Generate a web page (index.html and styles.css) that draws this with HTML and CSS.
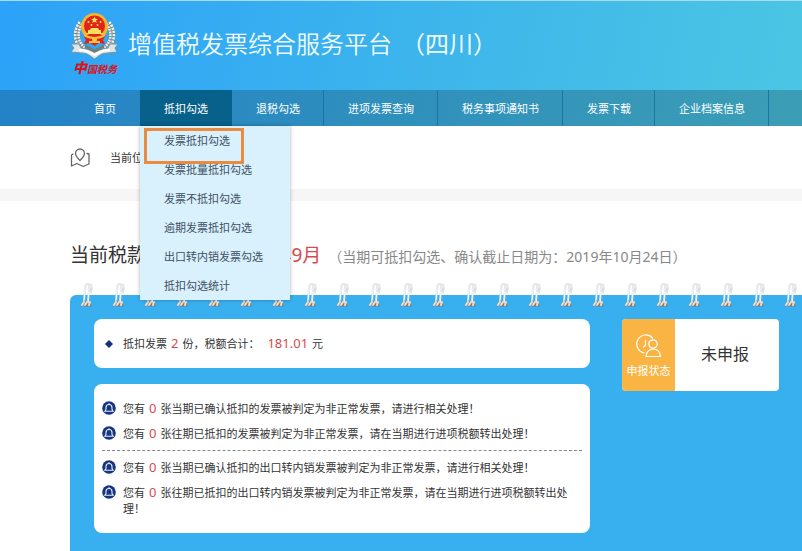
FILE: index.html
```
<!DOCTYPE html>
<html lang="zh-CN">
<head>
    <meta charset="UTF-8">
    <title>增值税发票综合服务平台</title>
    <link rel="stylesheet" href="styles.css">
</head>
<body>
    <header class="header">
        <div class="brand">
            <div class="logo">
                <svg width="50" height="48" viewBox="0 0 50 48" aria-hidden="true">
                    <!-- wheat wreath -->
                    <g fill="none">
                        <path d="M11 11 C5 19 5 30 14 37 M38 11 C44 19 44 30 35 37" stroke="#6d8796" stroke-width="6"/>
                        <path d="M11 11 C5 19 5 30 14 37 M38 11 C44 19 44 30 35 37" stroke="#f3f3ea" stroke-width="6" stroke-dasharray="2 1"/>
                        <path d="M11 11 C5 19 5 30 14 37 M38 11 C44 19 44 30 35 37" stroke="#7d8f90" stroke-width="1"/>
                    </g>
                    <!-- ribbon -->
                    <path d="M1 32 L9 32 L11 36 C19 37 21 39 24.500 40 C28 39 30 37 38 36 L40 32 L48 32 L45 36 L47 40 L38 41 C31 41 29 44 24.500 47 C20 44 18 41 11 41 L1 40 L4 36 Z" fill="#dfe6e6" stroke="#7892a0" stroke-width="1"/>
                    <path d="M9 38 C18 38 20 41 24.500 43 C29 41 31 38 40 38" fill="none" stroke="#fff" stroke-width="2"/>
                    <path d="M15 34 L24.500 39 L34 34" fill="none" stroke="#6f7f78" stroke-width="3"/>
                    <!-- emblem -->
                    <circle cx="24.500" cy="14.500" r="13.500" fill="#f5b52e"/>
                    <circle cx="24.500" cy="14" r="10.500" fill="#e2231a"/>
                    <path d="M24.500 4.500 l1 2.300 2.500 .2 -1.900 1.600 .6 2.400 -2.200 -1.300 -2.200 1.300 .6 -2.400 -1.900 -1.600 2.500 -.2Z" fill="#ffe15a"/>
                    <g fill="#ffe15a">
                        <circle cx="18.500" cy="10" r="1"/>
                        <circle cx="30.500" cy="10" r="1"/>
                        <circle cx="21.500" cy="13" r="1"/>
                        <circle cx="27.500" cy="13" r="1"/>
                        <path d="M20 18 L21 16 H28 L29 18 H31 V21 H33 V22 H16 V21 H18 V18Z"/>
                    </g>
                    <path d="M13 23 H36 L33 28 L35 32 L29 31 L24.500 34 L20 31 L14 32 L16 28Z" fill="#e2231a"/>
                    <path d="M14 23 C20 27 29 27 35 23 M19 30 H30" fill="none" stroke="#f8c43c" stroke-width="2"/>
                    <circle cx="24.500" cy="27.500" r="2.500" fill="#f8c43c"/>
                </svg>
                <span class="logo-text"><b>中</b>国税务</span>
            </div>
            <h1>增值税发票综合服务平台<span class="region">（四川）</span></h1>
        </div>
        <nav>
            <ul class="nav">
                <li><a href="#">首页</a></li>
                <li class="active">
                    <a href="#">抵扣勾选</a>
                    <ul class="submenu">
                        <li class="marked"><a href="#">发票抵扣勾选</a></li>
                        <li><a href="#">发票批量抵扣勾选</a></li>
                        <li><a href="#">发票不抵扣勾选</a></li>
                        <li><a href="#">逾期发票抵扣勾选</a></li>
                        <li><a href="#">出口转内销发票勾选</a></li>
                        <li><a href="#">抵扣勾选统计</a></li>
                    </ul>
                </li>
                <li><a href="#">退税勾选</a></li>
                <li><a href="#">进项发票查询</a></li>
                <li><a href="#">税务事项通知书</a></li>
                <li><a href="#">发票下载</a></li>
                <li><a href="#">企业档案信息</a></li>
            </ul>
        </nav>
    </header>

    <div class="breadcrumb">
        <svg width="20" height="20" viewBox="0 0 20 20" fill="none" stroke="#666" stroke-width="1.300" stroke-linejoin="round" stroke-linecap="round" aria-hidden="true">
            <path d="M10 12.500 C7 9.500 5.500 7.500 5.500 5.500 A4.500 4.500 0 0 1 14.500 5.500 C14.500 7.500 13 9.500 10 12.500Z"/>
            <path d="M3 6 L1.500 7 V18 L7 15.500 L13 18.500 L19 16 V6 L17 5.500"/>
        </svg>
        <span>当前位置：</span>
    </div>

    <main>
        <h2 class="period">当前税款所属期：<span class="date">2019年9月</span><small>（当期可抵扣勾选、确认截止日期为：2019年10月24日）</small></h2>

        <div class="panel">
            <svg class="rings" width="100%" height="26" aria-hidden="true">
                <defs>
                    <pattern id="ring" width="32" height="26" patternUnits="userSpaceOnUse">
                        <g fill="none" stroke-linecap="round">
                            <path d="M14 20 L15 7 C15 2 18 1 19 3 L20 8 M18 20 L19 7 C19 2 22 1 22 6 L21 10" stroke="#dcdfe1" stroke-width="2"/>
                            <path d="M14 20 L15 7 C15 2 18 1 19 3 M18 20 L19 7 C19 2 22 1 22 6" stroke="#f3f5f6" stroke-width="1"/>
                            <path d="M12 24 L14 20 L15 24 M16 24 L17 20 L18 24 M20 20 L21 24" stroke="#8a7a70" stroke-width="1.500"/>
                            <path d="M12 23 L14 20 M15 23 L17 20 M19 23 L20 20" stroke="#f6dcc6" stroke-width="2"/>
                        </g>
                    </pattern>
                </defs>
                <rect width="100%" height="26" fill="url(#ring)"/>
            </svg>

            <div class="cards">
                <section class="card summary">
                    <svg width="8" height="8" viewBox="0 0 8 8" aria-hidden="true"><path d="M4 0 L8 4 L4 8 L0 4Z" fill="#15317a"/></svg>
                    <p>抵扣发票<span class="num">2</span>份，税额合计：<span class="num amount">181.01</span>元</p>
                </section>

                <section class="card">
                    <svg width="0" height="0" class="symbols" aria-hidden="true">
                        <symbol id="bell" viewBox="0 0 14 14">
                            <circle cx="7" cy="7" r="6.800" fill="#17357f"/>
                            <path d="M2.800 10.300 L4 8.500 V6.500 C4 2.500 10 2.500 10 6.500 V8.500 L11.200 10.300Z" fill="none" stroke="#e8eefb" stroke-width="1.100"/>
                            <path d="M7 2.200 V4" stroke="#e8eefb" stroke-width="1.200"/>
                        </symbol>
                    </svg>
                    <ul class="notices">
                        <li><svg width="14" height="14"><use href="#bell"/></svg><p>您有<span class="num">0</span>张当期已确认抵扣的发票被判定为非正常发票，请进行相关处理！</p></li>
                        <li><svg width="14" height="14"><use href="#bell"/></svg><p>您有<span class="num">0</span>张往期已抵扣的发票被判定为非正常发票，请在当期进行进项税额转出处理！</p></li>
                    </ul>
                    <ul class="notices">
                        <li><svg width="14" height="14"><use href="#bell"/></svg><p>您有<span class="num">0</span>张当期已确认抵扣的出口转内销发票被判定为非正常发票，请进行相关处理！</p></li>
                        <li><svg width="14" height="14"><use href="#bell"/></svg><p>您有<span class="num">0</span>张往期已抵扣的出口转内销发票被判定为非正常发票，请在当期进行进项税额转出处理！</p></li>
                    </ul>
                </section>
            </div>

            <aside class="status">
                <div class="status-label">
                    <svg width="26" height="24" viewBox="0 0 26 24" fill="none" stroke="#fff" stroke-width="1.200" stroke-linecap="round" stroke-linejoin="round" aria-hidden="true">
                        <path d="M8 18.800 A9 9 0 1 1 16.500 4"/>
                        <path d="M9.500 6 V11 L7.500 13"/>
                        <circle cx="17" cy="10" r="4.200"/>
                        <path d="M10 22.500 C10 12.500 24.500 12.500 24.500 22.500Z"/>
                    </svg>
                    <span>申报状态</span>
                </div>
                <div class="status-value">未申报</div>
            </aside>
        </div>
    </main>
</body>
</html>
```

FILE: styles.css
```
* {
    box-sizing: border-box;
}

body {
    font-family: "Noto Sans", "Noto Sans CJK SC", sans-serif;
    font-size: 11px;
    line-height: 16px;
    color: #333;
    background-color: #fff;
    margin: 0;
    min-height: 100vh;
    display: flex;
    flex-direction: column;
    overflow: hidden;
}

h1, h2, p, ul {
    margin: 0;
    padding: 0;
    font-weight: normal;
}

ul {
    list-style: none;
}

a {
    color: inherit;
    text-decoration: none;
}

.header {
    background: linear-gradient(100deg, #2ca2f9, #3cb4ec 50%, #4bc6e3);
    border-top: 1px solid #a9dcf9;
}

.brand {
    display: flex;
    gap: 8px;
    height: 89px;
    padding: 11px 0 0 70px;
}

.logo {
    display: flex;
    flex-direction: column;
    align-items: center;
    width: 50px;
}

.logo-text {
    color: #d8141c;
    font-size: 10px;
    font-style: italic;
    font-weight: bold;
    white-space: nowrap;
}

.logo-text b {
    font-size: 14px;
}

h1 {
    color: #f0fbff;
    font-family: "Noto Sans CJK SC", sans-serif;
    font-size: 24px;
    font-weight: 350;
    line-height: 62px;
    white-space: nowrap;
}

.region {
    font-weight: normal;
    margin-left: 9px;
}

.nav {
    display: flex;
    background-color: rgba(0, 0, 0, 0.2);
    color: #fff;
    padding-left: 70px;
    white-space: nowrap;
}

.nav > li {
    position: relative;
    border-right: 1px solid #1b759c;
}

.nav > li:first-child, .nav > .active {
    border-color: transparent;
}

.nav > .active {
    background-color: #07618a;
}

.nav > li > a {
    display: block;
    line-height: 37px;
    height: 36px;
    padding: 0 23px 0 24px;
}

.submenu {
    position: absolute;
    top: 100%;
    left: 0;
    z-index: 2;
    width: 150px;
    background-color: #d9f0fd;
    color: #40505f;
    box-shadow: 0 0 4px rgba(0, 0, 0, 0.3);
}

.submenu a {
    display: block;
    line-height: 29px;
    padding-left: 24px;
}

.submenu a:hover {
    color: #07618a;
}

.marked {
    position: relative;
}

.marked::after {
    content: "";
    position: absolute;
    top: 2px;
    left: 4px;
    width: 94px;
    height: 30px;
    border: 3px solid #ea8b42;
    pointer-events: none;
}

.breadcrumb {
    display: flex;
    align-items: center;
    gap: 20px;
    height: 75px;
    padding-left: 70px;
    border-bottom: 12px solid #f6f6f6;
}

main {
    display: flex;
    flex: 1;
    flex-direction: column;
    padding: 38px 0 0 70px;
}

.period {
    font-size: 19px;
    line-height: 32px;
    white-space: nowrap;
}

.date {
    color: #d14b4f;
    margin: 0 7px;
}

.period small {
    color: #888;
    font-size: 14px;
    line-height: 20px;
}

.panel {
    position: relative;
    display: flex;
    flex: 1;
    align-items: flex-start;
    gap: 32px;
    margin-top: 24px;
    padding: 24px 23px 19px 24px;
    background-color: #38b0ef;
    border-top-left-radius: 6px;
}

.rings {
    position: absolute;
    top: -13px;
    left: 0;
}

.cards {
    display: flex;
    flex: 1;
    flex-direction: column;
    gap: 16px;
}

.card {
    background-color: #fff;
    border-radius: 8px;
    padding: 17px 8px 16px;
}

.summary {
    display: flex;
    align-items: center;
    gap: 10px;
    padding-left: 11px;
}

.num {
    color: #d14b4f;
    font-size: 13px;
    line-height: 1;
    margin: 0 4px;
}

.amount {
    margin-left: 8px;
}

.symbols {
    position: absolute;
}

.notices {
    display: flex;
    flex-direction: column;
    gap: 9px;
}

.notices + .notices {
    margin-top: 8px;
    padding-top: 9px;
    border-top: 1px dashed #888;
}

.notices li {
    display: flex;
    gap: 7px;
    padding-right: 8px;
}

.notices svg {
    flex: none;
}

.status {
    display: flex;
    width: 157px;
    height: 72px;
    background-color: #fff;
    border-radius: 4px;
    overflow: hidden;
}

.status-label {
    display: flex;
    flex-direction: column;
    align-items: center;
    justify-content: flex-end;
    gap: 5px;
    width: 53px;
    padding-bottom: 12px;
    background-color: #f9b443;
    color: #fff;
}

.status-value {
    flex: 1;
    font-size: 16px;
    line-height: 70px;
    padding-right: 4px;
    text-align: center;
}
```
